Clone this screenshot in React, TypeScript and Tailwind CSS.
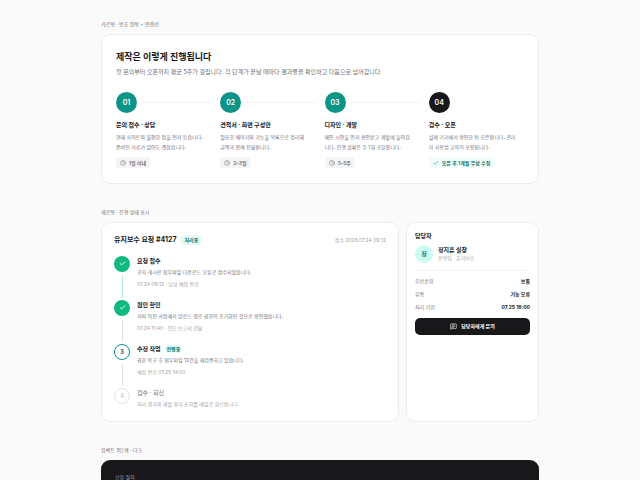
import type React from "react"
import { Check, Clock, MessageSquareText } from "lucide-react"
import clsx from "clsx"

type ProcessStep = {
  no: string
  title: string
  lines: string[]
  chip: string
  final?: boolean
}

type TimelineEntry = {
  title: string
  body: string
  meta?: string
  state: "done" | "current" | "waiting"
}

const STEPS: ProcessStep[] = [
  {
    no: "01",
    title: "문의 접수 · 상담",
    lines: ["현재 사이트와 불편한 점을 먼저 듣습니다.", "준비된 자료가 없어도 괜찮습니다."],
    chip: "1일 이내",
  },
  {
    no: "02",
    title: "견적서 · 화면 구성안",
    lines: ["필요한 페이지와 기능을 목록으로 정리해", "금액과 함께 전달합니다."],
    chip: "2–3일",
  },
  {
    no: "03",
    title: "디자인 · 개발",
    lines: ["메인 시안을 먼저 확인받고 개발에 들어갑", "니다. 진행 상황은 주 1회 공유합니다."],
    chip: "3–5주",
  },
  {
    no: "04",
    title: "검수 · 오픈",
    lines: ["실제 기기에서 확인한 뒤 오픈합니다. 관리", "자 사용법 교육이 포함됩니다."],
    chip: "오픈 후 1개월 무상 수정",
    final: true,
  },
]

const TIMELINE: TimelineEntry[] = [
  {
    title: "요청 접수",
    body: "공지 게시판 첨부파일 다운로드 오류로 접수되었습니다.",
    meta: "07.24 09:12 · 담당 배정 완료",
    state: "done",
  },
  {
    title: "원인 확인",
    body: "서버 이전 과정에서 업로드 경로 권한이 초기화된 것으로 확인했습니다.",
    meta: "07.24 11:40 · 진단 보고서 전달",
    state: "done",
  },
  {
    title: "수정 작업",
    body: "권한 복구 후 첨부파일 12건을 재검증하고 있습니다.",
    meta: "예상 완료 07.25 14:00",
    state: "current",
  },
  {
    title: "검수 · 회신",
    body: "처리 결과와 재발 방지 조치를 메일로 회신합니다.",
    state: "waiting",
  },
]

const FACTS = [
  ["우선순위", "보통"],
  ["유형", "기능 오류"],
  ["처리 기한", "07.25 18:00"],
]

export default function App() {
  return (
    <main
      lang="ko"
      className="h-screen overflow-hidden bg-[#fafafa] px-4 pt-[19px] font-['Inter','Noto_Sans_CJK_KR',sans-serif] text-[5px] leading-[10px] text-zinc-500"
    >
      <div className="mx-auto flex max-w-[438px] flex-col gap-[23px]">
        <Section label="가로형 · 번호 원형 + 연결선">
          <Card className="px-[14px] pt-[15px] pb-[14px]">
            <h2 className="text-[9px] leading-[14px] font-bold text-zinc-900">제작은 이렇게 진행됩니다</h2>
            <p className="mt-[3px] font-['Noto_Sans_CJK_KR',sans-serif] text-[6px] leading-[10px]">
              첫 문의부터 오픈까지 평균 5주가 걸립니다. 각 단계가 끝날 때마다 결과물을 확인하고 다음으로 넘어갑니다.
            </p>
            <ol className="mt-[15px] grid grid-cols-4 gap-[9px]">
              {STEPS.map((step) => (
                <ProcessColumn key={step.no} step={step} />
              ))}
            </ol>
          </Card>
        </Section>

        <Section label="세로형 · 진행 상태 표시">
          <div className="grid grid-cols-[1fr_133px] gap-[7px]">
            <Card className="px-3 pt-3 pb-2">
              <header className="flex items-center">
                <h2 className="text-[7px] leading-[10px] font-bold text-zinc-900">유지보수 요청 #4127</h2>
                <span className="ml-1 rounded-full bg-[#e6fbf6] px-1 font-semibold text-[#0f766e]">처리중</span>
                <span className="ml-auto text-zinc-400">접수 2026.07.24 09:12</span>
              </header>
              <ol className="mt-[11px]">
                {TIMELINE.map((entry, index) => (
                  <TimelineRow key={entry.title} entry={entry} no={index + 1} last={index === TIMELINE.length - 1} />
                ))}
              </ol>
            </Card>
            <ContactCard />
          </div>
        </Section>

        <Section label="컴팩트 3단계 · 다크">
          <div className="rounded-[9px] bg-[#18181b] px-[14px] pt-3 pb-10 text-zinc-400">신청 절차</div>
        </Section>
      </div>
    </main>
  )
}

function Section({ label, children }: { label: string; children: React.ReactNode }) {
  return (
    <section>
      <h3 className="mb-[5px]">{label}</h3>
      {children}
    </section>
  )
}

function Card({ className, children }: { className?: string; children: React.ReactNode }) {
  return <div className={clsx("rounded-[9px] border border-[#ededf0] bg-white", className)}>{children}</div>
}

function ProcessColumn({ step }: { step: ProcessStep }) {
  const ChipIcon = step.final ? Check : Clock
  return (
    <li>
      <div className="flex items-center gap-[5px]">
        <span
          className={clsx(
            "flex size-[21px] shrink-0 items-center justify-center rounded-full text-[7px] font-semibold text-white",
            step.final ? "bg-[#18181b]" : "bg-[#0d9488]",
          )}
        >
          {step.no}
        </span>
        {!step.final && <span className="flex-1 border-t border-dotted border-zinc-200" />}
      </div>
      <h4 className="mt-[7px] text-[6px] font-bold text-zinc-900">{step.title}</h4>
      <p className="mt-[2px] whitespace-nowrap">
        {step.lines.map((line) => (
          <span key={line} className="block">
            {line}
          </span>
        ))}
      </p>
      <span
        className={clsx(
          "mt-[5px] inline-flex h-[11px] items-center gap-[3px] rounded-[3px] px-1 font-semibold",
          step.final ? "bg-teal-50 text-[#0f766e]" : "bg-zinc-100 text-zinc-500",
        )}
      >
        <ChipIcon className="size-[6px]" aria-hidden="true" />
        {step.chip}
      </span>
    </li>
  )
}

function TimelineRow({ entry, no, last }: { entry: TimelineEntry; no: number; last: boolean }) {
  const { state } = entry
  return (
    <li className="flex gap-[7px]">
      <div className="flex flex-col items-center">
        <span
          className={clsx(
            "flex size-4 shrink-0 items-center justify-center rounded-full text-[6px] font-bold",
            state === "done" && "bg-[#10b981] text-white",
            state === "current" && "border border-[#0d9488] bg-white text-[#0f766e]",
            state === "waiting" && "border border-zinc-200 bg-white text-zinc-300",
          )}
        >
          {state === "done" ? <Check className="size-[7px]" strokeWidth={3} aria-hidden="true" /> : no}
        </span>
        {!last && (
          <span
            className={clsx("mt-1 mb-[2px] w-px flex-1", state === "done" && no === 1 ? "bg-[#b7ead8]" : "bg-zinc-200")}
          />
        )}
      </div>
      <div className={last ? "pb-1" : "pb-[11px]"}>
        <div className="flex items-center gap-1">
          <h4 className={clsx("text-[6px]", state === "waiting" ? "font-semibold text-zinc-400" : "font-bold text-zinc-900")}>
            {entry.title}
          </h4>
          {state === "current" && (
            <span className="rounded-[2px] bg-[#e6fbf6] px-[2px] leading-[8px] font-semibold text-[#0f766e]">진행중</span>
          )}
        </div>
        <p className={clsx("mt-px", state === "waiting" && "text-zinc-400")}>{entry.body}</p>
        {entry.meta && <p className="mt-[2px] text-zinc-400">{entry.meta}</p>}
      </div>
    </li>
  )
}

function ContactCard() {
  return (
    <Card className="px-2 pt-2">
      <h2 className="text-[6px] font-bold text-zinc-900">담당자</h2>
      <div className="mt-1 flex items-center gap-[5px] border-b border-zinc-100 pb-[7px]">
        <span className="flex size-[18px] items-center justify-center rounded-full bg-[#ccfbf1] text-[6px] font-bold text-[#0f766e]">
          정
        </span>
        <div className="leading-[8px]">
          <p className="text-[6px] font-bold text-zinc-900">정지훈 실장</p>
          <p className="text-zinc-400">운영팀 · 유지보수</p>
        </div>
      </div>
      <dl className="mt-[5px] flex flex-col gap-[3px]">
        {FACTS.map(([term, value]) => (
          <div key={term} className="flex justify-between">
            <dt>{term}</dt>
            <dd className="font-bold text-zinc-900">{value}</dd>
          </div>
        ))}
      </dl>
      <button
        type="button"
        className="mt-[6px] flex h-[17px] w-full items-center justify-center gap-1 rounded-[5px] bg-[#18181b] font-semibold text-white"
      >
        <MessageSquareText className="size-[7px]" aria-hidden="true" />
        담당자에게 문의
      </button>
    </Card>
  )
}
